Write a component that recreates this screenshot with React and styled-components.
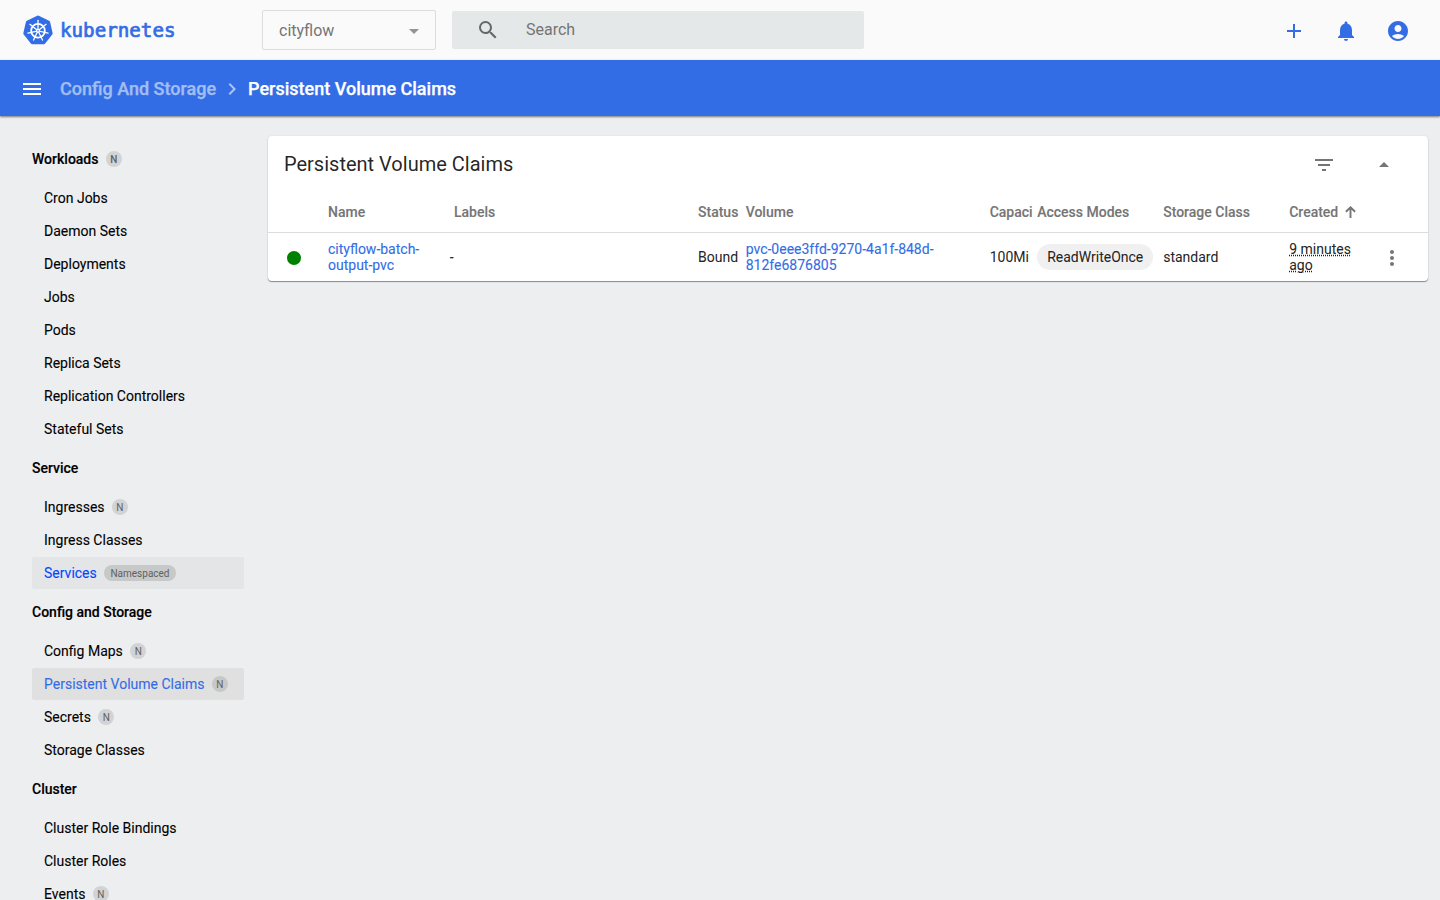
import React from "react";
import styled, { createGlobalStyle } from "styled-components";
import {
  MdAccountCircle,
  MdAdd,
  MdArrowDropUp,
  MdChevronRight,
  MdFilterList,
  MdMenu,
  MdMoreVert,
  MdNotifications,
  MdSearch,
} from "react-icons/md";

const GlobalStyle = createGlobalStyle`
  * { box-sizing: border-box; }
  body {
    margin: 0;
    background: #edeef0;
    color: rgba(0, 0, 0, 0.87);
    font: 400 14px/16px Roboto, "Liberation Sans", sans-serif;
  }
`;

const Page = styled.div`
  height: 900px;
  display: flex;
  flex-direction: column;
  overflow: hidden;
`;

const TopBar = styled.header`
  height: 60px;
  flex: none;
  display: flex;
  align-items: center;
  padding: 0 30px 0 23px;
  background: #fafafa;
`;

const Logo = styled.div`
  width: 239px;
  display: flex;
  align-items: center;
  color: #326de6;
  svg { flex: none; }
`;

const Select = styled.div`
  width: 174px;
  height: 40px;
  display: flex;
  align-items: center;
  justify-content: space-between;
  padding: 1px 16px 0;
  border: 1px solid #dcdcdc;
  border-radius: 2px;
  font-size: 16px;
  line-height: 18px;
  color: #757575;
`;

const Caret = styled.span`
  border: 5px solid transparent;
  border-top-color: #949494;
  border-bottom: 0;
  margin-top: 1px;
`;

const Search = styled.div`
  width: 412px;
  height: 38px;
  margin-left: 16px;
  padding: 0 0 0 24px;
  display: flex;
  align-items: center;
  gap: 26px;
  border-radius: 2px;
  background: #e4e8e9;
  font-size: 16px;
  color: #757575;
  svg { color: #666; }
`;

const Actions = styled.div`
  margin-left: auto;
  padding-top: 2px;
  display: flex;
  gap: 28px;
  color: #326de6;
`;

const Crumbs = styled.nav`
  height: 56px;
  flex: none;
  display: flex;
  align-items: center;
  padding: 1px 20px 0;
  position: relative;
  background: #326de6;
  color: #fff;
  box-shadow: 0 1px 2px rgba(0, 0, 0, 0.5);
  font-size: 18px;
  font-weight: 500;
  line-height: 24px;
  -webkit-text-stroke: 0.25px currentColor;
`;

const Crumb = styled.span`
  margin-left: ${(p) => (p.$current ? 4 : 16)}px;
  opacity: ${(p) => (p.$current ? 1 : 0.55)};
`;

const CrumbArrow = styled(MdChevronRight)`
  margin-left: 4px;
  opacity: 0.6;
`;

const Body = styled.div`
  flex: 1;
  min-height: 0;
  display: flex;
`;

const Sidebar = styled.aside`
  width: 268px;
  flex: none;
  padding: 23px 24px 0 32px;
  overflow: hidden;
  color: #000;
`;

const Group = styled.section`
  display: flex;
  flex-direction: column;
  gap: 1px;
  padding-bottom: 3px;
`;

const GroupTitle = styled.h2`
  height: 42px;
  margin: 0;
  padding-top: 12px;
  display: flex;
  align-items: flex-start;
  font-size: 14px;
  line-height: 16px;
  font-weight: 500;
  -webkit-text-stroke: 0.15px currentColor;
`;

const NavItem = styled.a`
  height: 32px;
  flex: none;
  display: flex;
  align-items: center;
  padding: 0 12px;
  border-radius: 2px;
  color: ${(p) => (p.$state === "active" ? "#326de6" : p.$state === "hover" ? "#0049ff" : "#000")};
  background: ${(p) => (p.$state === "active" ? "#e0e0e0" : p.$state === "hover" ? "#e4e5e7" : "transparent")};
  -webkit-text-stroke: 0.1px currentColor;
`;

const Badge = styled.span`
  height: 16px;
  min-width: 16px;
  margin-left: 7.4px;
  padding: 1px ${(p) => (p.$wide ? 6.3 : 0)}px 0;
  border-radius: 8px;
  text-align: center;
  font-size: 10px;
  line-height: 15px;
  background: ${(p) => (p.$dark ? "#c7c8c8" : "#d2d3d4")};
  color: #616161;
  -webkit-text-stroke: 0;
`;

const Main = styled.main`
  flex: 1;
  padding: 20px 12px 0 0;
`;

const Card = styled.section`
  height: 145px;
  border-radius: 4px;
  background: #fff;
  box-shadow: 0 1px 1px rgba(0, 0, 0, 0.42), 0 0 2px rgba(0, 0, 0, 0.1);
`;

const CardHead = styled.div`
  height: 56px;
  display: flex;
  align-items: center;
  padding: 1px 32px 0 16px;
  color: #757575;
`;

const CardTitle = styled.h1`
  flex: 1;
  margin: 0 0 2px;
  font-size: 20px;
  line-height: 24px;
  font-weight: 400;
  color: rgba(0, 0, 0, 0.87);
`;

const CardActions = styled.div`
  display: flex;
  gap: 36px;
`;

const Row = styled.div`
  height: ${(p) => (p.$head ? 41 : 48)}px;
  display: grid;
  grid-template-columns: 60px 126px 244px 47.7px 244px 47.5px 126px 126px 83px 40px;
  align-items: center;
  font-weight: ${(p) => (p.$head ? 500 : 400)};
  color: ${(p) => (p.$head ? "#757575" : "rgba(0, 0, 0, 0.87)")};
  border-bottom: ${(p) => (p.$head ? "1px solid #dcdcdc" : "0")};
  -webkit-text-stroke: 0.1px currentColor;
`;

const Cell = styled.div`
  display: flex;
  align-items: center;
  min-width: 0;
  margin-left: ${(p) => p.$shift || 0}px;
  white-space: nowrap;
`;

const SortIcon = styled.svg`
  margin: 0 0 1px 7px;
  fill: none;
  stroke: #757575;
  stroke-width: 1.9;
`;

const MoreIcon = styled(MdMoreVert)`
  margin-top: 2px;
  color: #757575;
`;

const Link = styled.a`
  color: #326de6;
`;

const Dot = styled.span`
  width: 14px;
  height: 14px;
  margin: 1px 0 0 19px;
  border-radius: 50%;
  background: #008000;
`;

const Chip = styled.span`
  height: 26px;
  padding: 0 10px;
  border-radius: 13px;
  line-height: 26px;
  background: #f0f0f0;
`;

const Age = styled.span`
  text-decoration: underline dotted;
`;

const nav = [
  {
    title: "Workloads",
    badge: true,
    items: [["Cron Jobs"], ["Daemon Sets"], ["Deployments"], ["Jobs"], ["Pods"], ["Replica Sets"], ["Replication Controllers"], ["Stateful Sets"]],
  },
  {
    title: "Service",
    items: [["Ingresses", "N"], ["Ingress Classes"], ["Services", "Namespaced", "hover"]],
  },
  {
    title: "Config and Storage",
    items: [["Config Maps", "N"], ["Persistent Volume Claims", "N", "active"], ["Secrets", "N"], ["Storage Classes"]],
  },
  {
    title: "Cluster",
    items: [["Cluster Role Bindings"], ["Cluster Roles"], ["Events", "N"]],
  },
];

const ring = (n, r) =>
  Array.from({ length: n }, (_, i) => {
    const a = ((i * 360) / n - 90) * (Math.PI / 180);
    return [16 + r * Math.cos(a), 16 + r * Math.sin(a)];
  });

function HelmLogo() {
  return (
    <svg width="30" height="31" viewBox="0 0 32 32">
      <polygon
        points={ring(7, 14).map((p) => p.join(",")).join(" ")}
        fill="#326de6"
        stroke="#326de6"
        strokeWidth="4"
        strokeLinejoin="round"
      />
      <g stroke="#fff" fill="none" strokeLinecap="round">
        <circle cx="16" cy="16.3" r="7.3" strokeWidth="1.9" />
        {ring(7, 11).map(([x, y], i) => (
          <line key={i} x1="16" y1="16.3" x2={x} y2={y + 0.3} strokeWidth="1.4" />
        ))}
      </g>
      <circle cx="16" cy="16.3" r="2.2" fill="#fff" />
      <circle cx="16" cy="16.3" r="0.8" fill="#326de6" />
    </svg>
  );
}

function Wordmark() {
  return (
    <svg width="130" height="30" viewBox="0 0 130 30">
      <text
        x="7"
        y="22.4"
        textLength="115.5"
        lengthAdjust="spacingAndGlyphs"
        fontFamily="'DejaVu Sans Mono', monospace"
        fontSize="19"
        fill="#326de6"
        stroke="#326de6"
        strokeWidth="0.7"
      >
        kubernetes
      </text>
    </svg>
  );
}

function SortArrow() {
  return (
    <SortIcon width="11" height="12" viewBox="0 0 11 12">
      <path d="M5.5 12V1.5M0.9 5.8L5.5 1.3L10.1 5.8" />
    </SortIcon>
  );
}

export default function App() {
  return (
    <Page>
      <GlobalStyle />
      <TopBar>
        <Logo>
          <HelmLogo />
          <Wordmark />
        </Logo>
        <Select>
          cityflow
          <Caret />
        </Select>
        <Search>
          <MdSearch size={24} />
          Search
        </Search>
        <Actions>
          <MdAdd size={24} />
          <MdNotifications size={24} />
          <MdAccountCircle size={24} />
        </Actions>
      </TopBar>
      <Crumbs>
        <MdMenu size={24} />
        <Crumb>Config And Storage</Crumb>
        <CrumbArrow size={24} />
        <Crumb $current>Persistent Volume Claims</Crumb>
      </Crumbs>
      <Body>
        <Sidebar>
          {nav.map((group) => (
            <Group key={group.title}>
              <GroupTitle>
                {group.title}
                {group.badge && <Badge>N</Badge>}
              </GroupTitle>
              {group.items.map(([label, badge, state]) => (
                <NavItem key={label} $state={state}>
                  {label}
                  {badge && (
                    <Badge $wide={badge.length > 1} $dark={!!state}>
                      {badge}
                    </Badge>
                  )}
                </NavItem>
              ))}
            </Group>
          ))}
        </Sidebar>
        <Main>
          <Card>
            <CardHead>
              <CardTitle>Persistent Volume Claims</CardTitle>
              <CardActions>
                <MdFilterList size={24} />
                <MdArrowDropUp size={24} />
              </CardActions>
            </CardHead>
            <Row $head>
              <Cell />
              <Cell>Name</Cell>
              <Cell>Labels</Cell>
              <Cell>Status</Cell>
              <Cell>Volume</Cell>
              <Cell>Capaci</Cell>
              <Cell>Access Modes</Cell>
              <Cell>Storage Class</Cell>
              <Cell>
                Created
                <SortArrow />
              </Cell>
            </Row>
            <Row>
              <Cell>
                <Dot />
              </Cell>
              <Cell>
                <Link>
                  cityflow-batch-
                  <br />
                  output-pvc
                </Link>
              </Cell>
              <Cell $shift={-4.3}>-</Cell>
              <Cell>Bound</Cell>
              <Cell>
                <Link>
                  pvc-0eee3ffd-9270-4a1f-848d-
                  <br />
                  812fe6876805
                </Link>
              </Cell>
              <Cell>100Mi</Cell>
              <Cell>
                <Chip>ReadWriteOnce</Chip>
              </Cell>
              <Cell>standard</Cell>
              <Cell>
                <Age>
                  9 minutes
                  <br />
                  ago
                </Age>
              </Cell>
              <Cell $shift={8}>
                <MoreIcon size={24} />
              </Cell>
            </Row>
          </Card>
        </Main>
      </Body>
    </Page>
  );
}
